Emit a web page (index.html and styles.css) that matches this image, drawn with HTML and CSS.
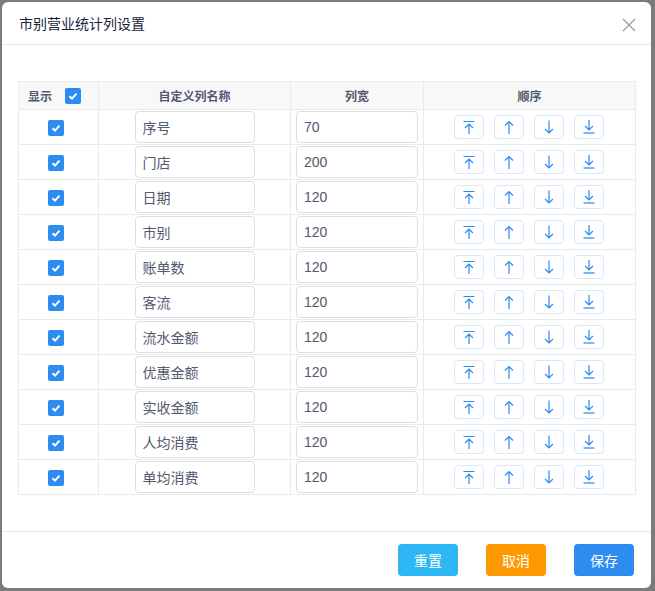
FILE: index.html
```html
<!DOCTYPE html>
<html lang="zh-CN">
<head>
    <meta charset="UTF-8">
    <title>市别营业统计列设置</title>
    <link rel="stylesheet" href="styles.css">
</head>
<body>
    <div class="modal">
        <div class="modal-header">
            <span class="modal-title">市别营业统计列设置</span>
            <span class="modal-close">
                <svg width="14" height="14" viewBox="0 0 14 14"><path d="M1 1L13 13M13 1L1 13" stroke="#999" stroke-width="1.2" fill="none"/></svg>
            </span>
        </div>

        <div class="modal-body">
            <table class="col-table">
                <colgroup>
                    <col style="width:80px">
                    <col style="width:192px">
                    <col style="width:133px">
                    <col>
                </colgroup>
                <thead>
                    <tr>
                        <th class="th-show">显示 <span class="checkbox"><svg viewBox="0 0 16 16"><path d="M4.5 8.3L7 10.6L11.5 5.6" stroke="#fff" stroke-width="2" fill="none"/></svg></span></th>
                        <th>自定义列名称</th>
                        <th>列宽</th>
                        <th>顺序</th>
                    </tr>
                </thead>
                <tbody id="rows"></tbody>
            </table>
        </div>

        <div class="modal-footer">
            <button class="btn btn-info">重置</button>
            <button class="btn btn-warning">取消</button>
            <button class="btn btn-primary">保存</button>
        </div>
    </div>

    <script>
        const columns = [
            ['序号', 70], ['门店', 200], ['日期', 120], ['市别', 120],
            ['账单数', 120], ['客流', 120], ['流水金额', 120], ['优惠金额', 120],
            ['实收金额', 120], ['人均消费', 120], ['单均消费', 120]
        ];

        const check = '<span class="checkbox"><svg viewBox="0 0 16 16"><path d="M4.5 8.3L7 10.6L11.5 5.6" stroke="#fff" stroke-width="2" fill="none"/></svg></span>';

        // order button icons
        const icons = {
            top: '<path d="M2.5 2.5H13.5M8 15V5M4 9L8 5L12 9"/>',
            up: '<path d="M8 15V2.5M4 6.5L8 2.5L12 6.5"/>',
            down: '<path d="M8 1.5V14M4 10L8 14L12 10"/>',
            bottom: '<path d="M8 1V11M4 7L8 11L12 7"/><path d="M2.5 14H13.5" stroke="#7fb5f5" stroke-width="2"/>'
        };

        const tbody = document.getElementById('rows');
        columns.forEach(function (c) {
            const btns = ['top', 'up', 'down', 'bottom'].map(function (k) {
                return '<button class="order-btn"><svg width="16" height="16" viewBox="0 0 16 16" fill="none" stroke="#2d8cf0" stroke-width="1.2">' + icons[k] + '</svg></button>';
            }).join('');
            const tr = document.createElement('tr');
            tr.innerHTML =
                '<td class="td-show">' + check + '</td>' +
                '<td class="td-name"><input class="input input-name" type="text" value="' + c[0] + '"></td>' +
                '<td class="td-width"><input class="input input-width" type="text" value="' + c[1] + '"></td>' +
                '<td class="td-order"><div class="order-group">' + btns + '</div></td>';
            tbody.appendChild(tr);
        });
    </script>
</body>
</html>
```

FILE: styles.css
```css
* {
    margin: 0;
    padding: 0;
    box-sizing: border-box;
}

body {
    font-family: "Liberation Sans", "Noto Sans CJK SC", sans-serif;
    background: #7b7b7b;
    padding: 2px;
    width: 655px;
    height: 591px;
    overflow: hidden;
}

.modal {
    width: 649px;
    height: 586px;
    background: #fff;
    border-radius: 6px;
    display: flex;
    flex-direction: column;
}

.modal-header {
    height: 43px;
    border-bottom: 1px solid #e8eaec;
    display: flex;
    align-items: center;
    justify-content: space-between;
    padding: 0 15px 0 17px;
}

.modal-title {
    font-size: 14px;
    color: #17233d;
}

.modal-close {
    display: flex;
    margin-top: 3px;
}

.modal-body {
    flex: 1;
    padding: 36px 15px 0 16px;
}

.col-table {
    width: 618px;
    border-collapse: collapse;
    table-layout: fixed;
    border: 1px solid #dcdee2;
    font-size: 14px;
    color: #515a6e;
}

.col-table th {
    height: 28px;
    background: #f8f8f9;
    font-size: 12px;
    font-weight: bold;
    color: #515a6e;
    border: 1px solid #e8eaec;
    text-align: center;
}

.col-table th.th-show {
    text-align: left;
    padding-left: 9px;
}

.th-show .checkbox {
    margin-left: 10px;
    vertical-align: -3px;
}

.col-table td {
    height: 35px;
    border: 1px solid #e8eaec;
    text-align: center;
}

.td-show {
    padding-right: 6px;
}

.checkbox {
    display: inline-block;
    width: 16px;
    height: 16px;
    border-radius: 2px;
    background: #2d8cf0;
    vertical-align: middle;
}

.checkbox svg {
    display: block;
    width: 16px;
    height: 16px;
}

.input {
    height: 32px;
    border: 1px solid #dcdee2;
    border-radius: 4px;
    padding: 0 7px;
    font-family: "Liberation Sans", "Noto Sans CJK SC", sans-serif;
    font-size: 14px;
    color: #515a6e;
    vertical-align: middle;
    outline: none;
}

.input-name {
    width: 120px;
}

.input-width {
    width: 122px;
}

.order-group {
    display: flex;
    justify-content: center;
    gap: 10px;
    padding-right: 1px;
}

.order-btn {
    width: 30px;
    height: 24px;
    border: 1px solid #d7e8fc;
    border-radius: 4px;
    background: #fff;
    display: flex;
    align-items: center;
    justify-content: center;
}

.order-btn svg {
    display: block;
}

.modal-footer {
    height: 57px;
    border-top: 1px solid #e8eaec;
    display: flex;
    justify-content: flex-end;
    align-items: center;
    gap: 28px;
    padding: 0 17px 0 0;
}

.btn {
    width: 60px;
    height: 32px;
    border: none;
    border-radius: 4px;
    color: #fff;
    font-size: 14px;
    font-family: "Liberation Sans", "Noto Sans CJK SC", sans-serif;
}

.btn-info {
    background: #2db7f5;
}

.btn-warning {
    background: #ff9900;
}

.btn-primary {
    background: #2d8cf0;
}
```
